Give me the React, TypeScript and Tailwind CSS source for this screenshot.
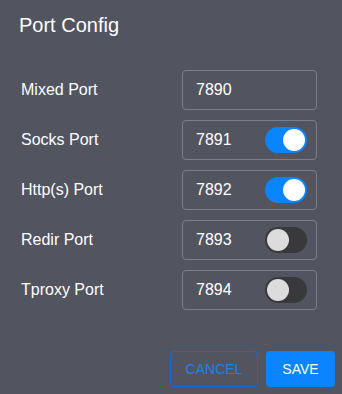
import { useState } from "react";

type Row = { label: string; port: string; toggle?: boolean };

const rows: Row[] = [
  { label: "Mixed Port", port: "7890" },
  { label: "Socks Port", port: "7891", toggle: true },
  { label: "Http(s) Port", port: "7892", toggle: true },
  { label: "Redir Port", port: "7893", toggle: false },
  { label: "Tproxy Port", port: "7894", toggle: false },
];

function Switch({ on, onChange }: { on: boolean; onChange: () => void }) {
  return (
    <button
      type="button"
      onClick={onChange}
      className={`flex h-[26px] w-[42px] items-center rounded-full px-[2px] ${
        on ? "justify-end bg-[#0a84ff]" : "justify-start bg-[#39393d]"
      }`}
    >
      <span className={`h-[22px] w-[22px] rounded-full ${on ? "bg-white" : "bg-[#dcdcdc]"}`} />
    </button>
  );
}

export default function App() {
  const [state, setState] = useState(rows.map((r) => !!r.toggle));

  return (
    <div
      className="flex h-[394px] w-[342px] flex-col bg-[#525460] text-white"
      style={{ fontFamily: '"Liberation Sans", Arial, sans-serif' }}
    >
      <h2 className="px-[19px] pt-[11px] text-[20px] leading-[28px]">Port Config</h2>
      <div className="mt-[31px] flex flex-col gap-[10px] pl-[21px] pr-[25px]">
        {rows.map((r, i) => (
          <div key={r.label} className="flex items-center justify-between">
            <span className="text-[16px]">{r.label}</span>
            <div className="flex h-[40px] w-[135px] items-center justify-between rounded-[4px] border border-[#7c7e89] pl-[13px] pr-[9px]">
              <span className="text-[16px]">{r.port}</span>
              {r.toggle !== undefined && (
                <Switch
                  on={state[i]}
                  onChange={() => setState((s) => s.map((v, j) => (j === i ? !v : v)))}
                />
              )}
            </div>
          </div>
        ))}
      </div>
      <div className="mt-auto flex justify-end gap-[8px] pb-[7px] pr-[7px]">
        <button
          type="button"
          className="h-[36px] w-[88px] rounded-[4px] border border-[#0a6fd8] text-[14px] text-[#1683f0]"
        >
          CANCEL
        </button>
        <button type="button" className="h-[36px] w-[69px] rounded-[4px] bg-[#0a84ff] text-[14px] text-white">
          SAVE
        </button>
      </div>
    </div>
  );
}
